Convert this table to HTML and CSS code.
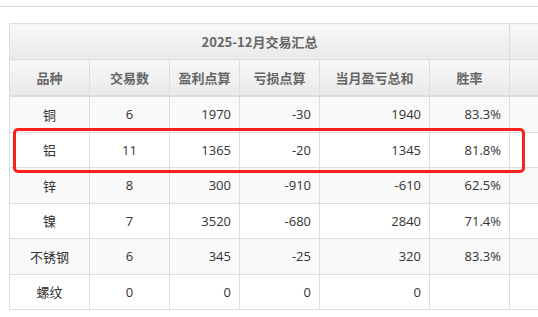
FILE: index.html
```html
<!DOCTYPE html>
<html lang="zh-CN">
<head>
<meta charset="utf-8">
<title>2025-12月交易汇总</title>
<link rel="stylesheet" href="styles.css">
</head>
<body>
<div class="topbar"></div>
<div class="wrap">
  <table class="summary">
    <colgroup>
      <col class="c80"><col class="c80"><col class="c70"><col class="c80"><col class="c110"><col class="c80"><col class="c80">
    </colgroup>
    <thead>
      <tr class="title-row">
        <th colspan="6">2025-12月交易汇总</th>
        <th></th>
      </tr>
      <tr class="head-row">
        <th>品种</th>
        <th>交易数</th>
        <th>盈利点算</th>
        <th>亏损点算</th>
        <th>当月盈亏总和</th>
        <th>胜率</th>
        <th></th>
      </tr>
    </thead>
    <tbody>
      <tr class="odd"><td class="ctr">铜</td><td class="ctr">6</td><td>1970</td><td>-30</td><td>1940</td><td>83.3%</td><td></td></tr>
      <tr class="hl"><td class="ctr">铝</td><td class="ctr">11</td><td>1365</td><td>-20</td><td>1345</td><td>81.8%</td><td></td></tr>
      <tr class="odd"><td class="ctr">锌</td><td class="ctr">8</td><td>300</td><td>-910</td><td>-610</td><td>62.5%</td><td></td></tr>
      <tr><td class="ctr">镍</td><td class="ctr">7</td><td>3520</td><td>-680</td><td>2840</td><td>71.4%</td><td></td></tr>
      <tr class="odd"><td class="ctr">不锈钢</td><td class="ctr">6</td><td>345</td><td>-25</td><td>320</td><td>83.3%</td><td></td></tr>
      <tr><td class="ctr">螺纹</td><td class="ctr">0</td><td>0</td><td>0</td><td>0</td><td></td><td></td></tr>
    </tbody>
  </table>
  <div class="mark"></div>
</div>
</body>
</html>
```

FILE: styles.css
```css
html, body {
  margin: 0;
  padding: 0;
  background: #fff;
  overflow: hidden;
}
body {
  width: 538px;
  height: 317px;
  font-family: "Open Sans", "Noto Sans CJK SC", sans-serif;
  font-size: 13px;
  color: #333;
}
.topbar {
  height: 6px;
  border-bottom: 1px solid #d6d9e4;
}
.wrap {
  position: relative;
  padding: 16px 0 0 9px;
  overflow: hidden;
}
.summary {
  border-collapse: collapse;
  table-layout: fixed;
  width: 580px;
  border: 1px solid #ddd;
}
.c80 { width: 80px; }
.c70 { width: 70px; }
.c110 { width: 110px; }
.summary th,
.summary td {
  border: 1px solid #ddd;
  padding: 0 8px;
  white-space: nowrap;
  overflow: hidden;
}
.summary th {
  font-family: "Noto Sans CJK SC", sans-serif;
  font-weight: bold;
  color: #666;
  text-align: center;
  background: linear-gradient(#f8f8f8, #e9e9e9);
}
.title-row th { height: 35px; }
.head-row th { height: 35px; border-bottom: 2px solid #ddd; }
.summary td {
  height: 34.5px;
  text-align: right;
}
.summary td.ctr { text-align: center; }
.summary tr.odd td { background: #f9f9f9; }
.mark {
  position: absolute;
  left: 13px;
  top: 121px;
  width: 506px;
  height: 39px;
  border: 3px solid #fb1f1f;
  border-radius: 5px;
}
```
